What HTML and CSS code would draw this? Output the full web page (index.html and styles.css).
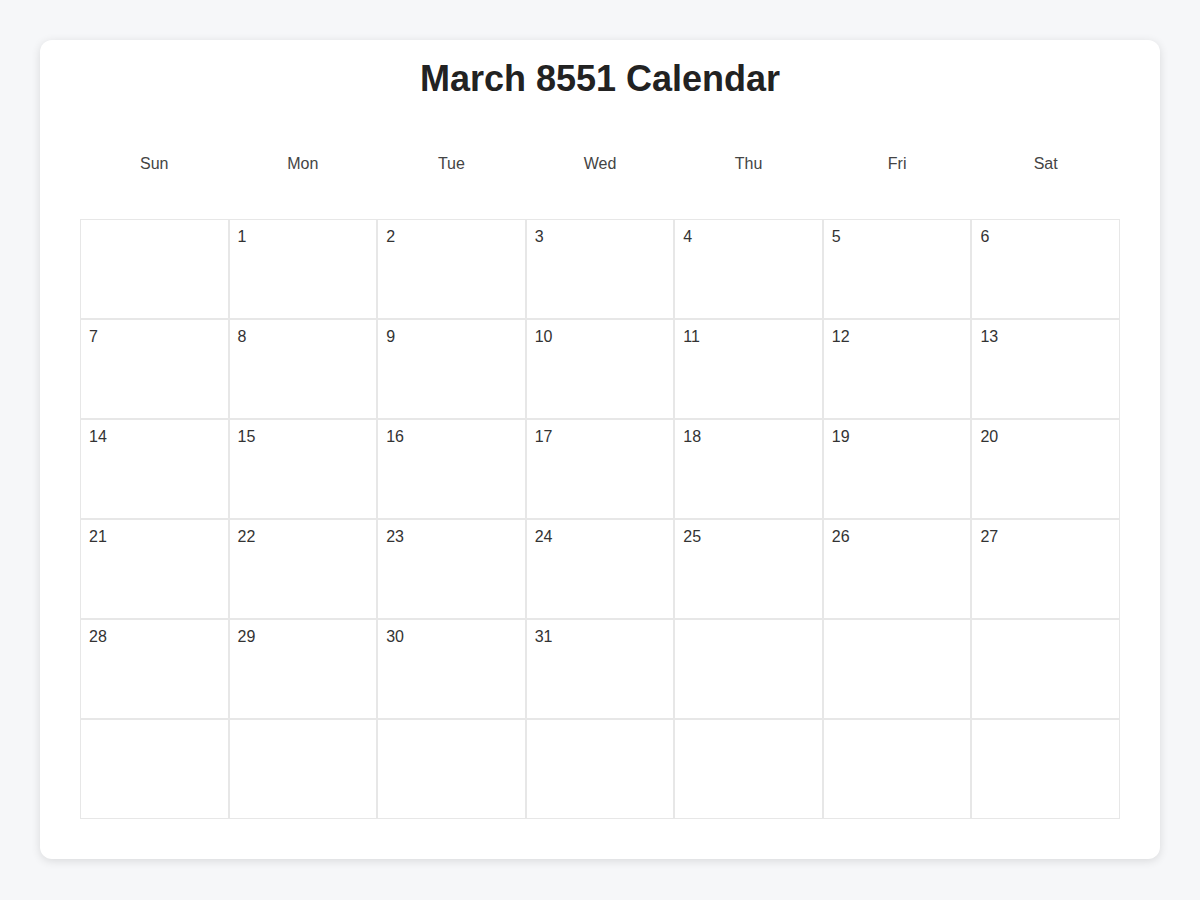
FILE: index.html
```html
<!DOCTYPE html>
<html lang="en">
<head>
<meta charset="utf-8">
<title>March 8551 Calendar</title>
<link rel="stylesheet" href="styles.css">
</head>
<body>
<div class="card">
  <h1 class="title">March 8551 Calendar</h1>
  <div class="weekdays">
    <div class="weekday">Sun</div>
    <div class="weekday">Mon</div>
    <div class="weekday">Tue</div>
    <div class="weekday">Wed</div>
    <div class="weekday">Thu</div>
    <div class="weekday">Fri</div>
    <div class="weekday">Sat</div>
  </div>
  <div class="grid">
    <div class="cell"></div>
    <div class="cell">1</div>
    <div class="cell">2</div>
    <div class="cell">3</div>
    <div class="cell">4</div>
    <div class="cell">5</div>
    <div class="cell">6</div>
    <div class="cell">7</div>
    <div class="cell">8</div>
    <div class="cell">9</div>
    <div class="cell">10</div>
    <div class="cell">11</div>
    <div class="cell">12</div>
    <div class="cell">13</div>
    <div class="cell">14</div>
    <div class="cell">15</div>
    <div class="cell">16</div>
    <div class="cell">17</div>
    <div class="cell">18</div>
    <div class="cell">19</div>
    <div class="cell">20</div>
    <div class="cell">21</div>
    <div class="cell">22</div>
    <div class="cell">23</div>
    <div class="cell">24</div>
    <div class="cell">25</div>
    <div class="cell">26</div>
    <div class="cell">27</div>
    <div class="cell">28</div>
    <div class="cell">29</div>
    <div class="cell">30</div>
    <div class="cell">31</div>
    <div class="cell"></div>
    <div class="cell"></div>
    <div class="cell"></div>
    <div class="cell"></div>
    <div class="cell"></div>
    <div class="cell"></div>
    <div class="cell"></div>
    <div class="cell"></div>
    <div class="cell"></div>
    <div class="cell"></div>
  </div>
</div>
</body>
</html>
```
FILE: styles.css
```css
html, body {
  margin: 0;
  padding: 0;
}
body {
  background: #f6f7f9;
  font-family: "Liberation Sans", Arial, sans-serif;
  color: #333;
  padding: 40px;
}
.card {
  background: #fff;
  border-radius: 12px;
  box-shadow: 0 2px 10px rgba(0, 0, 0, 0.12);
  padding: 18px 40px 40px;
}
.title {
  margin: 0;
  text-align: center;
  font-size: 36px;
  font-weight: bold;
  color: #222;
  line-height: 42px;
}
.weekdays {
  display: grid;
  grid-template-columns: repeat(7, 1fr);
  margin-top: 55px;
  margin-bottom: 46px;
}
.weekday {
  text-align: center;
  font-size: 16px;
  line-height: 18px;
  color: #444;
}
.grid {
  display: grid;
  grid-template-columns: repeat(7, 1fr);
  grid-auto-rows: 100px;
}
.cell {
  border: 1px solid #e7e7e7;
  box-sizing: border-box;
  padding: 8px;
  font-size: 16px;
  line-height: 18px;
  color: #333;
}
```
